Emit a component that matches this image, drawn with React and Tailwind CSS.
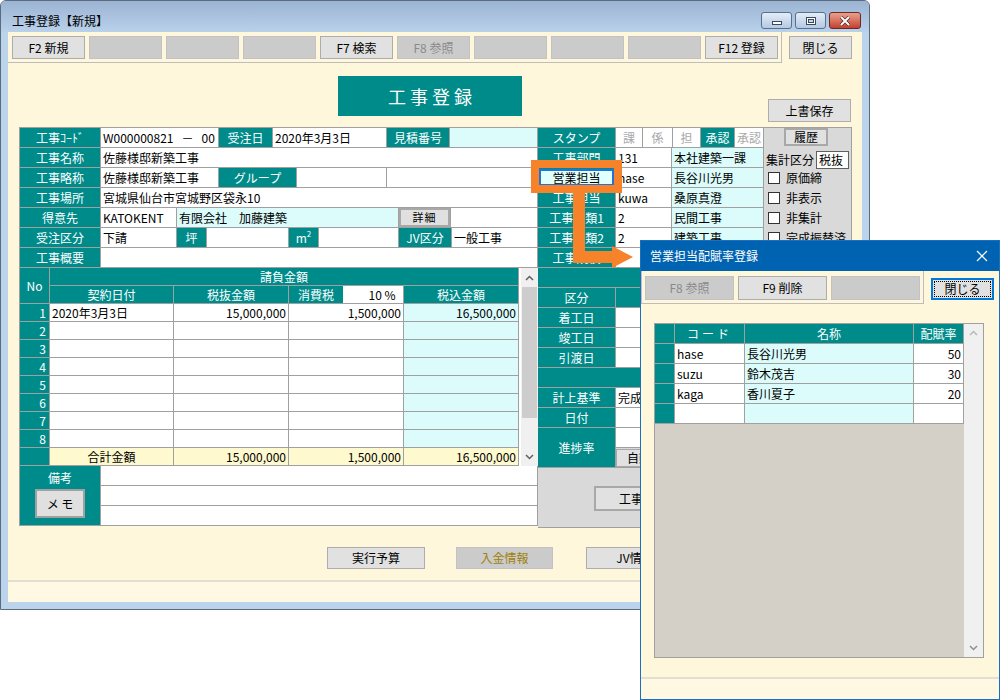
import React from "react";

const Lab = ({ w, h = "h-full", cls = "", children }) => (
  <div
    className={`${w} ${h} shrink-0 flex items-center justify-center bg-[#008b8b] text-white text-[12px] leading-none whitespace-nowrap ${cls}`}
  >
    {children}
  </div>
);

const Val = ({ w, cls = "bg-white", right, children }) => (
  <div
    className={`${w} h-full shrink-0 flex items-center px-[2px] text-[12px] leading-none text-black whitespace-pre overflow-hidden ${
      right ? "justify-end" : ""
    } ${cls}`}
  >
    {children}
  </div>
);

const Stamp = ({ w, children }) => (
  <div className={`${w} h-full shrink-0 flex items-center justify-center bg-white text-[12px] leading-none text-[#a8a8a8]`}>
    {children}
  </div>
);

const Btn = ({ w, h = "h-[23px]", kind = "normal", cls = "", children }) => {
  const k =
    kind === "blank"
      ? "bg-[#cbcbcb] border-[#c2c2c2]"
      : kind === "off"
      ? "bg-[#cbcbcb] border-[#c2c2c2] text-[#8a8a8a]"
      : kind === "gold"
      ? "bg-[#cbcbcb] border-[#c2c2c2] text-[#a07f0a]"
      : "bg-[#e1e1e1] border-[#adadad] text-black";
  return (
    <div className={`${w} ${h} shrink-0 border flex items-center justify-center text-[12px] leading-none whitespace-nowrap ${k} ${cls}`}>
      {children}
    </div>
  );
};

const Row = ({ children }) => <div className="flex gap-px h-[19px]">{children}</div>;

const Chev = ({ up, color = "#606060" }) => (
  <svg width="9" height="6" viewBox="0 0 9 6">
    <path d={up ? "M1 5 L4.5 1.5 L8 5" : "M1 1 L4.5 4.5 L8 1"} fill="none" stroke={color} strokeWidth="1.5" />
  </svg>
);

const Check = ({ children }) => (
  <div className="flex items-center gap-[6px] ml-[4px] h-[12px] mb-[8px]">
    <div className="w-[12px] h-[12px] bg-white border border-[#333]" />
    <span className="text-[12px] leading-none whitespace-nowrap">{children}</span>
  </div>
);

const WinControls = () => (
  <div className="flex gap-[3px] mt-[11px] mr-[8px]">
    <div className="w-[31px] h-[17px] rounded-[3px] border border-[#56708f] bg-gradient-to-b from-[#e4edf7] to-[#b4c9e2] flex items-end justify-center pb-[3px]">
      <div className="w-[10px] h-[4px] bg-white border border-[#3a4a5e]" />
    </div>
    <div className="w-[31px] h-[17px] rounded-[3px] border border-[#56708f] bg-gradient-to-b from-[#e4edf7] to-[#b4c9e2] flex items-center justify-center">
      <div className="w-[10px] h-[8px] border border-[#3a4a5e] bg-white p-[1px]">
        <div className="w-full h-full border border-[#3a4a5e] bg-[#c8d6e6]" />
      </div>
    </div>
    <div className="w-[32px] h-[17px] rounded-[3px] border border-[#6b2a24] bg-gradient-to-b from-[#e8a090] to-[#c2402c] flex items-center justify-center">
      <svg width="12" height="10" viewBox="0 0 12 10">
        <path d="M2 1 L10 9 M10 1 L2 9" stroke="#4a1a14" strokeWidth="3.2" />
        <path d="M2 1 L10 9 M10 1 L2 9" stroke="white" strokeWidth="2" />
      </svg>
    </div>
  </div>
);

const TopGrid = () => (
  <div className="w-[745px] bg-[#a0a0a0] p-px flex flex-col gap-px">
    <Row>
      <Lab w="w-[80px]">工事ｺｰﾄﾞ</Lab>
      <Val w="w-[117px]">{"W000000821   －   00"}</Val>
      <Lab w="w-[53px]">受注日</Lab>
      <Val w="w-[113px]">2020年3月3日</Val>
      <Lab w="w-[62px]">見積番号</Lab>
      <Val w="w-[87px]" cls="bg-[#dcfcfc]" />
      <Lab w="w-[77px]">スタンプ</Lab>
      <Stamp w="w-[26px]">課</Stamp>
      <Stamp w="w-[29px]">係</Stamp>
      <Stamp w="w-[27px]">担</Stamp>
      <Lab w="w-[33px]">承認</Lab>
      <Stamp w="w-[28px]">承認</Stamp>
    </Row>
    <Row>
      <Lab w="w-[80px]">工事名称</Lab>
      <Val w="w-[436px]">佐藤様邸新築工事</Val>
      <Lab w="w-[77px]">工事部門</Lab>
      <Val w="w-[55px]">131</Val>
      <Val w="w-[91px]" cls="bg-[#dcfcfc]">本社建築一課</Val>
    </Row>
    <Row>
      <Lab w="w-[80px]">工事略称</Lab>
      <Val w="w-[117px]">佐藤様邸新築工事</Val>
      <Lab w="w-[77px]">グループ</Lab>
      <Val w="w-[89px]" />
      <Val w="w-[150px]" />
      <div className="w-[77px] h-full shrink-0 bg-[#008b8b] p-px">
        <div className="w-full h-full bg-[#e0ffff] border-2 border-[#2472d8] flex items-center justify-center text-[12px] leading-none">
          営業担当
        </div>
      </div>
      <Val w="w-[55px]">hase</Val>
      <Val w="w-[91px]" cls="bg-[#dcfcfc]">長谷川光男</Val>
    </Row>
    <Row>
      <Lab w="w-[80px]">工事場所</Lab>
      <Val w="w-[436px]">宮城県仙台市宮城野区袋永10</Val>
      <Lab w="w-[77px]">工事担当</Lab>
      <Val w="w-[55px]">kuwa</Val>
      <Val w="w-[91px]" cls="bg-[#dcfcfc]">桑原真澄</Val>
    </Row>
    <Row>
      <Lab w="w-[80px]">得意先</Lab>
      <Val w="w-[75px]">KATOKENT</Val>
      <Val w="w-[221px]" cls="bg-[#dcfcfc]">有限会社　加藤建築</Val>
      <div className="w-[51px] h-full shrink-0 bg-white">
        <div className="w-full h-full bg-[#e0e0e0] border-2 border-[#a8a8a8] flex items-center justify-center text-[11px] leading-none tracking-[1px]">
          詳細
        </div>
      </div>
      <Val w="w-[86px]" />
      <Lab w="w-[77px]">工事種類1</Lab>
      <Val w="w-[55px]">2</Val>
      <Val w="w-[91px]" cls="bg-[#dcfcfc]">民間工事</Val>
    </Row>
    <Row>
      <Lab w="w-[80px]">受注区分</Lab>
      <Val w="w-[75px]">下請</Val>
      <Lab w="w-[29px]">坪</Lab>
      <Val w="w-[81px]" />
      <Lab w="w-[29px]">
        m<sup className="text-[8px]">2</sup>
      </Lab>
      <Val w="w-[79px]" />
      <Lab w="w-[52px]">JV区分</Lab>
      <Val w="w-[85px]">一般工事</Val>
      <Lab w="w-[77px]">工事種類2</Lab>
      <Val w="w-[55px]">2</Val>
      <Val w="w-[91px]" cls="bg-[#dcfcfc]">建築工事</Val>
    </Row>
    <Row>
      <Lab w="w-[80px]">工事概要</Lab>
      <Val w="w-[436px]" />
      <Lab w="w-[77px]">工事規模</Lab>
      <Val w="w-[55px]" />
      <Val w="w-[91px]" cls="bg-[#dcfcfc]" />
    </Row>
  </div>
);

const tableRows = [
  { no: 1, date: "2020年3月3日", ex: "15,000,000", tax: "1,500,000", inc: "16,500,000" },
  { no: 2 },
  { no: 3 },
  { no: 4 },
  { no: 5 },
  { no: 6 },
  { no: 7 },
  { no: 8 },
];

const AmountTable = () => (
  <div className="flex">
    <div className="w-[500px] bg-[#a0a0a0] px-px pb-px flex flex-col gap-px">
      <div className="flex gap-px h-[35px]">
        <Lab w="w-[29px]">No</Lab>
        <div className="flex flex-col gap-px w-[468px]">
          <Lab w="w-full" h="h-[17px]">請負金額</Lab>
          <div className="flex gap-px h-[17px]">
            <Lab w="w-[123px]">契約日付</Lab>
            <Lab w="w-[114px]">税抜金額</Lab>
            <div className="flex w-[114px] h-full">
              <Lab w="w-[54px]">消費税</Lab>
              <Val w="w-[60px]" right>
                {"10 %  "}
              </Val>
            </div>
            <Lab w="w-[114px]">税込金額</Lab>
          </div>
        </div>
      </div>
      {tableRows.map((r) => (
        <div key={r.no} className="flex gap-px h-[17px]">
          <div className="w-[29px] h-full shrink-0 bg-[#008b8b] text-white text-[12px] leading-none flex items-center justify-end pr-[3px]">
            {r.no}
          </div>
          <Val w="w-[123px]">{r.date}</Val>
          <Val w="w-[114px]" right>{r.ex}</Val>
          <Val w="w-[114px]" right>{r.tax}</Val>
          <Val w="w-[114px]" cls="bg-[#dcfcfc]" right>{r.inc}</Val>
        </div>
      ))}
      <div className="flex gap-px h-[17px]">
        <div className="w-[29px] h-full shrink-0 bg-[#008b8b]" />
        <div className="w-[123px] h-full shrink-0 bg-[#fef9cf] flex items-center justify-center text-[12px] leading-none">
          合計金額
        </div>
        <Val w="w-[114px]" cls="bg-[#fef9cf]" right>15,000,000</Val>
        <Val w="w-[114px]" cls="bg-[#fef9cf]" right>1,500,000</Val>
        <Val w="w-[114px]" cls="bg-[#fef9cf]" right>16,500,000</Val>
      </div>
    </div>
    <div className="w-[19px] h-[198px] bg-white pl-[2px]">
      <div className="w-[17px] h-full bg-[#f0f0f0] flex flex-col items-center">
        <div className="h-[19px] flex items-center">
          <Chev up />
        </div>
        <div className="w-[15px] h-[131px] bg-[#cdcdcd]" />
        <div className="mt-auto h-[19px] flex items-center">
          <Chev />
        </div>
      </div>
    </div>
  </div>
);

const Memo = () => (
  <div className="flex gap-px bg-[#a0a0a0] px-px pb-px w-[519px]">
    <div className="w-[80px] h-[59px] shrink-0 bg-[#008b8b] flex flex-col items-center">
      <span className="text-white text-[12px] leading-none mt-[6px]">備考</span>
      <div className="mt-[5px] w-[50px] h-[29px] bg-[#e0e0e0] border-2 border-[#a0a0a0] flex items-center justify-center text-[12px] leading-none">
        メ モ
      </div>
    </div>
    <div className="flex flex-col gap-px w-[436px]">
      <div className="h-[19px] bg-white" />
      <div className="h-[19px] bg-white" />
      <div className="h-[19px] bg-white" />
    </div>
  </div>
);

const R2 = ({ label, val, valCls = "bg-white" }) => (
  <Row>
    <Lab w="w-[77px]">{label}</Lab>
    <Val w="w-[147px]" cls={valCls}>{val}</Val>
  </Row>
);

const MidRight = () => (
  <div className="w-[226px] bg-[#a0a0a0] pr-px pb-px flex flex-col gap-px">
    <div className="h-[19px] bg-[#008b8b]" />
    <R2 label="区分" valCls="bg-[#008b8b]" />
    <R2 label="着工日" />
    <R2 label="竣工日" />
    <R2 label="引渡日" />
    <div className="h-[19px] bg-[#008b8b]" />
    <R2 label="計上基準" val="完成基準" />
    <R2 label="日付" />
    <div className="flex gap-px h-[39px]">
      <Lab w="w-[77px]">進捗率</Lab>
      <div className="flex flex-col gap-px w-[147px]">
        <div className="h-[19px] bg-white" />
        <div className="h-[19px] bg-[#d9d9d9] flex items-center">
          <div className="w-[70px] h-[18px] bg-[#e1e1e1] border border-[#a8a8a8] flex items-center justify-center text-[12px] leading-none">
            自動計算
          </div>
        </div>
      </div>
    </div>
    <div className="h-[59px] bg-[#d9d9d9] pt-[18px] pl-[56px]">
      <div className="w-[98px] h-[25px] bg-[#e1e1e1] border-2 border-[#a8a8a8] flex items-center justify-center text-[12px] leading-none">
        工事経歴
      </div>
    </div>
  </div>
);

const RightPanel = () => (
  <div className="w-[88px] h-[401px] shrink-0 bg-[#d9d9d9] border-t border-r border-b border-[#a0a0a0] flex flex-col">
    <div className="ml-[20px] w-[44px] h-[18px] bg-[#e1e1e1] border-2 border-[#a8a8a8] flex items-center justify-center text-[12px] leading-none">
      履歴
    </div>
    <div className="flex items-center ml-[2px] mt-[5px] gap-[2px] h-[18px]">
      <span className="text-[12px] leading-none whitespace-nowrap">集計区分</span>
      <div className="w-[33px] h-[18px] bg-white border border-[#606060] flex items-center pl-[2px] text-[12px] leading-none">
        税抜
      </div>
    </div>
    <div className="mt-[3px]">
      <Check>原価締</Check>
      <Check>非表示</Check>
      <Check>非集計</Check>
      <Check>完成振替済</Check>
    </div>
  </div>
);

const MainWindow = () => (
  <div className="absolute left-0 top-0 w-[870px] h-[610px] border border-[#5b6b7e] rounded-t-[6px] flex flex-col bg-[#bcd3ec]">
    <div className="h-[31px] shrink-0 flex items-start justify-between bg-gradient-to-b from-[#9bb4d2] to-[#bad1eb] rounded-t-[5px]">
      <span className="mt-[14px] ml-[11px] text-[12px] leading-none text-black">工事登録【新規】</span>
      <WinControls />
    </div>
    <div className="mx-[7px] h-[570px] bg-[#fef7dc] flex flex-col">
      <div className="h-[31px] shrink-0 flex items-start">
        <div className="w-[774px] h-[31px] border-r border-b border-[#bdbdbd] flex gap-[4px] pl-[4px] pt-[4px]">
          <Btn w="w-[73px]">F2 新規</Btn>
          <Btn w="w-[73px]" kind="blank" />
          <Btn w="w-[73px]" kind="blank" />
          <Btn w="w-[73px]" kind="blank" />
          <Btn w="w-[73px]">F7 検索</Btn>
          <Btn w="w-[73px]" kind="off">F8 参照</Btn>
          <Btn w="w-[73px]" kind="blank" />
          <Btn w="w-[73px]" kind="blank" />
          <Btn w="w-[73px]" kind="blank" />
          <Btn w="w-[73px]">F12 登録</Btn>
        </div>
        <Btn w="w-[63px]" cls="ml-[7px] mt-[4px]">閉じる</Btn>
      </div>
      <div className="h-[64px] shrink-0 flex">
        <div className="ml-[330px] mt-[13px] w-[184px] h-[40px] bg-[#008b8b] flex items-center justify-center pl-[4px] text-white text-[18px] leading-none tracking-[4px]">
          工事登録
        </div>
        <Btn w="w-[83px]" cls="ml-[246px] self-end mb-[5px]">上書保存</Btn>
      </div>
      <div className="flex pl-[11px] h-[401px]">
        <div className="w-[745px] flex flex-col">
          <TopGrid />
          <div className="flex">
            <div className="w-[519px] flex flex-col">
              <AmountTable />
              <Memo />
            </div>
            <MidRight />
          </div>
        </div>
        <RightPanel />
      </div>
      <div className="mt-[19px] flex pl-[319px] h-[22px]">
        <Btn w="w-[98px]" h="h-[22px]">実行予算</Btn>
        <Btn w="w-[97px]" h="h-[22px]" kind="gold" cls="ml-[31px]">入金情報</Btn>
        <Btn w="w-[98px]" h="h-[22px]" cls="ml-[33px]">JV情報</Btn>
        <Btn w="w-[98px]" h="h-[22px]" cls="ml-[33px]">工事台帳</Btn>
      </div>
      <div className="mt-[11px] h-[22px] border-t-2 border-[#e2ded2] bg-[#fff9e3]" />
    </div>
  </div>
);

const Annotation = () => (
  <>
    <div className="absolute left-[531px] top-[160px] w-[91px] h-[33px] border-[8px] border-[#f6822a]" />
    <svg className="absolute left-[572px] top-[192px]" width="64" height="78" viewBox="0 0 64 78">
      <path d="M1 0 H13 V59 H40 V54 L61 65 L40 76 V71 H1 Z" fill="#f6822a" />
    </svg>
  </>
);

const popupRows = [
  { code: "hase", name: "長谷川光男", rate: "50" },
  { code: "suzu", name: "鈴木茂吉", rate: "30" },
  { code: "kaga", name: "香川夏子", rate: "20" },
  { code: "", name: "", rate: "" },
];

const Popup = () => (
  <div className="absolute left-[640px] top-[240px] w-[360px] h-[460px] border border-[#1a6fc0] bg-[#fef7dc] flex flex-col">
    <div className="h-[30px] shrink-0 bg-[#0063b1] flex items-center justify-between pl-[9px] pr-[11px]">
      <span className="text-white text-[12px] leading-none">営業担当配賦率登録</span>
      <svg width="12" height="12" viewBox="0 0 12 12">
        <path d="M1 1 L11 11 M11 1 L1 11" stroke="white" strokeWidth="1.2" />
      </svg>
    </div>
    <div className="flex items-start h-[33px] shrink-0">
      <div className="w-[283px] h-[33px] border-l border-r border-b border-[#bdbdbd] flex gap-[4px] pl-[3px] pt-[5px]">
        <Btn w="w-[89px]" h="h-[24px]" kind="off">F8 参照</Btn>
        <Btn w="w-[89px]" h="h-[24px]">F9 削除</Btn>
        <Btn w="w-[89px]" h="h-[24px]" kind="blank" />
      </div>
      <div className="ml-[7px] mt-[7px] w-[63px] h-[22px] border-2 border-[#0078d7] bg-[#e1e1e1] p-px flex">
        <div className="flex-1 border border-dotted border-black flex items-center justify-center text-[12px] leading-none">
          閉じる
        </div>
      </div>
    </div>
    <div className="ml-[13px] mt-[19px] w-[330px] h-[335px] border border-[#a0a0a0] flex">
      <div className="w-[309px] bg-[#d4d0c8] flex flex-col">
        <div className="bg-[#a0a0a0] pr-px pb-px flex flex-col gap-px">
          <Row>
            <Lab w="w-[19px]" />
            <Lab w="w-[69px]" cls="tracking-[3px]">コード</Lab>
            <Lab w="w-[168px]">名称</Lab>
            <Lab w="w-[49px]">配賦率</Lab>
          </Row>
          {popupRows.map((r, i) => (
            <Row key={i}>
              <Lab w="w-[19px]" />
              <Val w="w-[69px]">{r.code}</Val>
              <Val w="w-[168px]" cls="bg-[#dcfcfc]">{r.name}</Val>
              <Val w="w-[49px]" right>{r.rate}</Val>
            </Row>
          ))}
        </div>
      </div>
      <div className="w-[19px] bg-[#f0f0f0] flex flex-col items-center justify-between py-[6px]">
        <Chev up color="#b8b8b8" />
        <Chev color="#909090" />
      </div>
    </div>
    <div className="mt-auto h-[22px] border-t-2 border-[#e2ded2] bg-[#fff9e3]" />
  </div>
);

export default function App() {
  return (
    <div className="relative w-[1000px] h-[700px] bg-white overflow-hidden font-['Noto_Sans_CJK_JP','Noto_Sans',sans-serif]">
      <MainWindow />
      <Annotation />
      <Popup />
    </div>
  );
}
